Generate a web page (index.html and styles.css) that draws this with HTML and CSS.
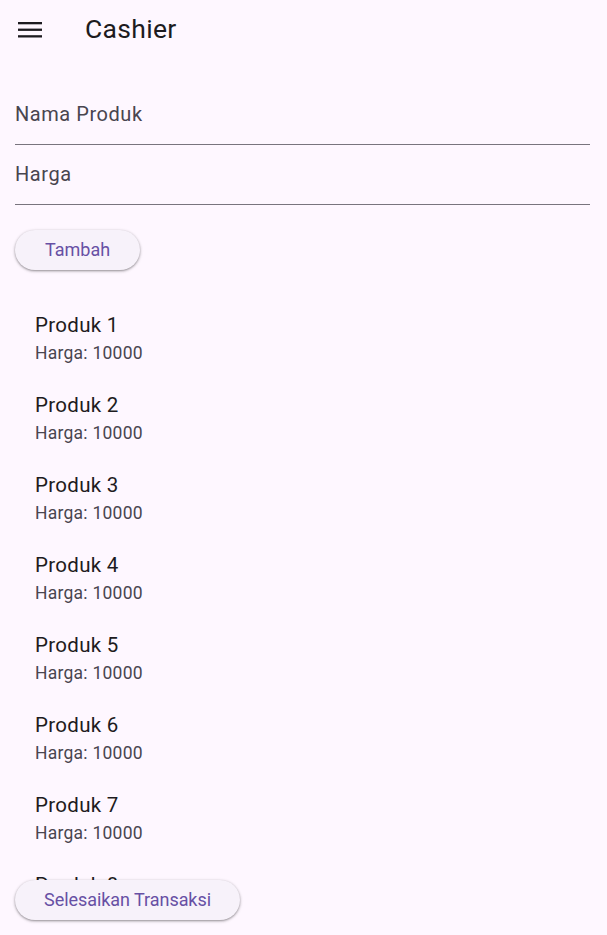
FILE: index.html
```html
<!DOCTYPE html>
<html>
<head>
<meta charset="utf-8">
<link rel="stylesheet" href="styles.css">
</head>
<body>
<div class="app">
  <header class="appbar">
    <button class="menu-btn" aria-label="menu">
      <svg width="24" height="17" viewBox="0 0 24 17"><rect x="0" y="1" width="24" height="2.3" fill="#1d1b20"/><rect x="0" y="7.6" width="24" height="2.3" fill="#1d1b20"/><rect x="0" y="14.2" width="24" height="2.3" fill="#1d1b20"/></svg>
    </button>
    <h1 class="title">Cashier</h1>
  </header>
  <main class="body">
    <div class="field"><span class="field-label">Nama Produk</span></div>
    <div class="field"><span class="field-label">Harga</span></div>
    <div class="actions"><button class="pill">Tambah</button></div>
    <div class="list">
      <div class="tile"><div class="tile-title">Produk 1</div><div class="tile-sub">Harga: 10000</div></div>
      <div class="tile"><div class="tile-title">Produk 2</div><div class="tile-sub">Harga: 10000</div></div>
      <div class="tile"><div class="tile-title">Produk 3</div><div class="tile-sub">Harga: 10000</div></div>
      <div class="tile"><div class="tile-title">Produk 4</div><div class="tile-sub">Harga: 10000</div></div>
      <div class="tile"><div class="tile-title">Produk 5</div><div class="tile-sub">Harga: 10000</div></div>
      <div class="tile"><div class="tile-title">Produk 6</div><div class="tile-sub">Harga: 10000</div></div>
      <div class="tile"><div class="tile-title">Produk 7</div><div class="tile-sub">Harga: 10000</div></div>
      <div class="tile"><div class="tile-title">Produk 8</div><div class="tile-sub">Harga: 10000</div></div>
      <div class="tile"><div class="tile-title">Produk 9</div><div class="tile-sub">Harga: 10000</div></div>
    </div>
    <div class="footer"><button class="pill">Selesaikan Transaksi</button></div>
  </main>
</div>
</body>
</html>
```
FILE: styles.css
```css
* { box-sizing: border-box; }
html, body { margin: 0; padding: 0; }
body {
  background: #fef7ff;
  font-family: Roboto, "Noto Sans", sans-serif;
  color: #1d1b20;
}
.app {
  height: 935px;
  display: flex;
  flex-direction: column;
}
.appbar {
  height: 58px;
  display: flex;
  align-items: center;
  flex: none;
}
.menu-btn {
  border: 0;
  background: none;
  padding: 0;
  margin-left: 18px;
  width: 24px;
  height: 17px;
  display: flex;
}
.title {
  margin: 0 0 0 43px;
  font-size: 26.5px;
  font-weight: 400;
  line-height: 30px;
  letter-spacing: 0.3px;
}
.body {
  flex: 1;
  min-height: 0;
  display: flex;
  flex-direction: column;
  padding: 27px 17px 15px 15px;
}
.field {
  height: 60px;
  border-bottom: 1.2px solid #79747e;
  display: flex;
  align-items: center;
  padding-bottom: 1px;
}
.field-label {
  font-size: 20px;
  color: #49454f;
  letter-spacing: 0.55px;
}
.actions { margin-top: 25px; flex: none; }
.pill {
  height: 40px;
  border: 0;
  border-radius: 20px;
  background: #f7f2fa;
  color: #6750a4;
  font-family: Roboto, "Noto Sans", sans-serif;
  font-size: 18px;
  font-weight: 400;
  padding: 0 30px 1px;
  box-shadow: 0 1px 2px rgba(0,0,0,0.3), 0 1px 3px 1px rgba(0,0,0,0.12);
}
.footer .pill { padding: 0 29px 2px; letter-spacing: -0.05px; }
.list {
  flex: 1;
  min-height: 0;
  overflow: hidden;
  margin-top: 29px;
}
.tile {
  height: 80px;
  padding: 4px 0 0 20px;
  display: flex;
  flex-direction: column;
  justify-content: center;
}
.tile-title {
  font-size: 20.5px;
  line-height: 24px;
  color: #1d1b20;
  letter-spacing: 0.3px;
}
.tile-sub {
  font-size: 17.5px;
  line-height: 32px;
  color: #49454f;
  letter-spacing: 0.25px;
}
.footer { flex: none; }
```
